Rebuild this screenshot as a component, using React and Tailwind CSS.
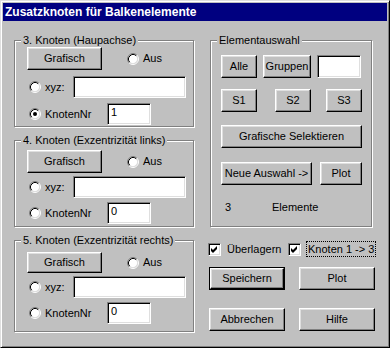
import React from "react";

// classic 3D edges
const raised =
  "border border-t-white border-l-white border-r-black border-b-black shadow-[inset_-1px_-1px_0_#808080,inset_1px_1px_0_#dfdfdf] bg-[#c0c0c0]";
const sunken =
  "border border-t-[#808080] border-l-[#808080] border-r-white border-b-white shadow-[inset_1px_1px_0_#000,inset_-1px_-1px_0_#dfdfdf] bg-white";

function Radio({ checked }) {
  return (
    <svg width="12" height="12" viewBox="0 0 12 12" className="shrink-0">
      <circle cx="6" cy="6" r="4.5" fill="#fff" />
      <path d="M9.89 2.11A5.5 5.5 0 0 0 2.11 9.89" fill="none" stroke="#808080" />
      <path d="M9.89 2.11A5.5 5.5 0 0 1 2.11 9.89" fill="none" stroke="#fff" />
      <path d="M9.18 2.82A4.5 4.5 0 0 0 2.82 9.18" fill="none" stroke="#000" />
      <path d="M9.18 2.82A4.5 4.5 0 0 1 2.82 9.18" fill="none" stroke="#dfdfdf" />
      {checked && <circle cx="6" cy="6" r="2" fill="#000" />}
    </svg>
  );
}

function Check() {
  return (
    <div className={`w-[13px] h-[13px] shrink-0 ${sunken}`}>
      <svg width="11" height="11" viewBox="0 0 11 11">
        <polygon points="2,4 4,6 8,2 8,5 4,9 2,7" fill="#000" />
      </svg>
    </div>
  );
}

function Btn({ className = "", children }) {
  return (
    <div className={`flex items-center justify-center leading-[13px] whitespace-nowrap ${raised} ${className}`}>
      {children}
    </div>
  );
}

function Group({ title, className = "", children }) {
  return (
    <div
      className={`flex flex-col border border-[#808080] shadow-[inset_1px_1px_0_#fff,1px_1px_0_#fff] ${className}`}
    >
      <div className="-mt-[7px] ml-[6px] flex">
        <span className="bg-[#c0c0c0] px-[2px] leading-[13px] h-[13px] whitespace-nowrap">{title}</span>
      </div>
      {children}
    </div>
  );
}

function NodeGroup({ title, btnRow, xyzRow, nrRow, value, checked, className }) {
  return (
    <Group title={title} className={className}>
      <div className={`flex items-center pl-[12px] ${btnRow}`}>
        <Btn className="w-[75px] h-full">Grafisch</Btn>
        <div className="ml-[25px]">
          <Radio />
        </div>
        <span className="ml-[4px]">Aus</span>
      </div>
      <div className={`flex items-center pl-[14px] h-[22px] ${xyzRow}`}>
        <Radio />
        <span className="ml-[4px] w-[28px]">xyz:</span>
        <div className={`w-[113px] h-full ${sunken}`} />
      </div>
      <div className={`flex items-center pl-[14px] h-[22px] ${nrRow}`}>
        <Radio checked={checked} />
        <span className="ml-[4px] w-[62px]">KnotenNr</span>
        <div className={`w-[44px] h-full pl-[3px] pt-[2px] leading-[13px] ${sunken}`}>{value}</div>
      </div>
    </Group>
  );
}

export default function App() {
  return (
    <div className="w-[390px] h-[348px] bg-[#c0c0c0] border border-t-[#dfdfdf] border-l-[#dfdfdf] border-r-black border-b-black shadow-[inset_1px_1px_0_#fff,inset_-1px_-1px_0_#808080] p-[2px] font-['Liberation_Sans',Arial,sans-serif] text-[11px] text-black">
      <div className="h-[18px] bg-[#000080] text-white font-bold text-[12px] leading-[18px] pl-[2px] whitespace-nowrap">
        Zusatzknoten für Balkenelemente
      </div>

      <div className="flex pl-[11px] pt-[19px]">
        {/* left column */}
        <div className="flex flex-col w-[180px] shrink-0">
          <NodeGroup
            title="3. Knoten (Haupachse)"
            className="h-[87px]"
            btnRow="h-[23px]"
            xyzRow="mt-[6px]"
            nrRow="mt-[5px]"
            value="1"
            checked
          />
          <NodeGroup
            title="4. Knoten (Exzentrizität links)"
            className="h-[87px] mt-[13px]"
            btnRow="h-[23px] mt-[3px]"
            xyzRow="mt-[3px]"
            nrRow="mt-[4px]"
            value="0"
          />
          <NodeGroup
            title="5. Knoten (Exzentrizität rechts)"
            className="h-[92px] mt-[13px]"
            btnRow="h-[21px] mt-[5px]"
            xyzRow="mt-[3px]"
            nrRow="mt-[4px]"
            value="0"
          />
        </div>

        {/* right column */}
        <div className="flex flex-col ml-[14px] w-[167px] shrink-0">
          <Group title="Elementauswahl" className="ml-[2px] w-[162px] h-[187px]">
            <div className="flex pl-[10px] mt-[8px] h-[23px]">
              <Btn className="w-[36px]">Alle</Btn>
              <Btn className="w-[48px] ml-[6px]">Gruppen</Btn>
              <div className={`w-[44px] ml-[6px] ${sunken}`} />
            </div>
            <div className="flex pl-[10px] mt-[11px] h-[23px]">
              <Btn className="w-[36px]">S1</Btn>
              <Btn className="w-[36px] ml-[18px]">S2</Btn>
              <Btn className="w-[36px] ml-[15px]">S3</Btn>
            </div>
            <div className="flex pl-[10px] mt-[13px] h-[23px]">
              <Btn className="w-[141px]">Grafische Selektieren</Btn>
            </div>
            <div className="flex pl-[10px] mt-[14px] h-[23px]">
              <Btn className="w-[91px]">Neue Auswahl -&gt;</Btn>
              <Btn className="w-[42px] ml-[8px]">Plot</Btn>
            </div>
            <div className="flex pl-[14px] mt-[16px] h-[13px] leading-[13px]">
              <span className="w-[47px]">3</span>
              <span>Elemente</span>
            </div>
          </Group>

          <div className="flex items-center h-[16px] mt-[14px] whitespace-nowrap">
            <Check />
            <span className="ml-[6px] w-[61px] shrink-0">Überlagern</span>
            <Check />
            <span className="ml-[5px] px-[1px] leading-[14px] border border-dotted border-black shrink-0">
              Knoten 1 -&gt; 3
            </span>
          </div>

          <div className="flex mt-[10px] h-[23px]">
            <div className="ml-[1px] w-[76px] border border-black flex">
              <Btn className="flex-1">Speichern</Btn>
            </div>
            <Btn className="w-[76px] ml-[14px]">Plot</Btn>
          </div>
          <div className="flex mt-[18px] h-[23px]">
            <Btn className="ml-[1px] w-[76px]">Abbrechen</Btn>
            <Btn className="w-[76px] ml-[14px]">Hilfe</Btn>
          </div>
        </div>
      </div>
    </div>
  );
}
